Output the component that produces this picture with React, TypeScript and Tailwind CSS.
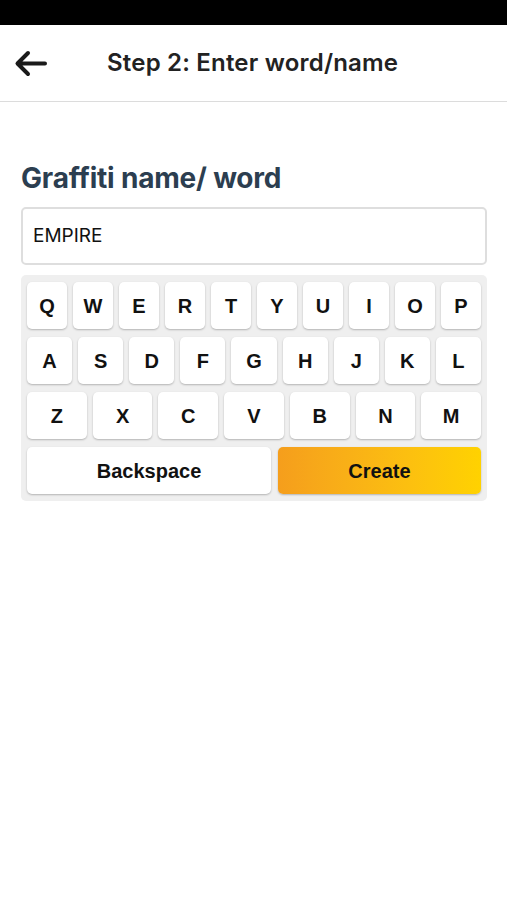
import React from 'react';

const rows = [
  ['Q', 'W', 'E', 'R', 'T', 'Y', 'U', 'I', 'O', 'P'],
  ['A', 'S', 'D', 'F', 'G', 'H', 'J', 'K', 'L'],
  ['Z', 'X', 'C', 'V', 'B', 'N', 'M'],
];

const keyCls =
  'flex-1 h-[47px] flex items-center justify-center bg-white rounded-[5px] shadow-[0_1px_2px_rgba(0,0,0,0.25)] text-[20px] font-bold text-[#111] font-["Liberation_Sans",Arial,sans-serif]';

export default function App() {
  return (
    <div className="min-h-screen w-[507px] bg-white flex flex-col font-['Inter',sans-serif]">
      {/* status bar */}
      <div className="h-[25px] bg-black" />

      {/* header */}
      <header className="h-[77px] flex items-center border-b border-[#dcdcdc]">
        <button className="w-[107px] h-full flex items-center pl-[14px]">
          <svg width="33" height="27" viewBox="0 0 33 27" fill="none">
            <path
              d="M31 13.5H4M14 3L3.5 13.5L14 24"
              stroke="#1a1a1a"
              strokeWidth="4"
              strokeLinecap="round"
              strokeLinejoin="round"
            />
          </svg>
        </button>
        <h1 className="text-[24px] font-semibold text-[#222] tracking-[0.2px]">Step 2: Enter word/name</h1>
      </header>

      <main className="pl-[21px] pr-[20px] pt-[58px]">
        <h2 className="text-[28px] leading-[36px] font-bold text-[#2c3e50] tracking-[-0.2px]">Graffiti name/ word</h2>

        <div className="mt-[11px] h-[58px] border-2 border-[#dedede] rounded-[5px] flex items-center px-[10px]">
          <span className="text-[19px] text-[#111] font-['Inter',sans-serif]">EMPIRE</span>
        </div>

        <div className="mt-[10px] bg-[#efefef] rounded-[5px] px-[6px] py-[7px] flex flex-col gap-[8px]">
          {rows.map((row, i) => (
            <div key={i} className="flex gap-[6px]">
              {row.map((k) => (
                <div key={k} className={keyCls}>
                  {k}
                </div>
              ))}
            </div>
          ))}
          <div className="flex gap-[7px]">
            <div className={keyCls + ' flex-none w-[244px]'}>Backspace</div>
            <div className="flex-1 h-[47px] flex items-center justify-center rounded-[5px] bg-gradient-to-r from-[#f59e1c] to-[#ffd200] shadow-[0_1px_2px_rgba(0,0,0,0.25)] text-[20px] font-bold text-[#111] font-['Liberation_Sans',Arial,sans-serif]">
              Create
            </div>
          </div>
        </div>
      </main>
    </div>
  );
}
